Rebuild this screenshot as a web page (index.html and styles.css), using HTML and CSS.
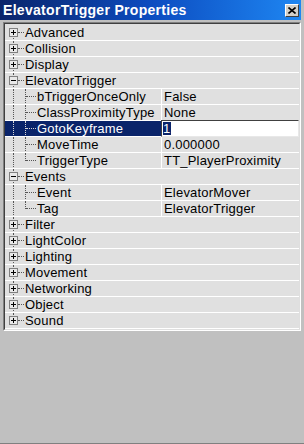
FILE: index.html
```html
<!DOCTYPE html>
<html>
<head>
<meta charset="utf-8">
<link rel="stylesheet" href="styles.css">
</head>
<body>
<div class="window">
  <div class="titlebar">
    <span class="title">ElevatorTrigger Properties</span>
    <span class="close"><svg width="8" height="7" viewBox="0 0 8 7"><path d="M0.5 0.5 L7.5 6.5 M7.5 0.5 L0.5 6.5" stroke="#000" stroke-width="1.6"/></svg></span>
  </div>
  <div class="panel"><div class="panel-inner">
    <div class="row cat first"><div class="name"><span class="gut"><span class="box plus"></span></span><span class="label">Advanced</span></div></div>
    <div class="row cat"><div class="name"><span class="gut"><span class="box plus"></span></span><span class="label">Collision</span></div></div>
    <div class="row cat"><div class="name"><span class="gut"><span class="box plus"></span></span><span class="label">Display</span></div></div>
    <div class="row cat"><div class="name"><span class="gut"><span class="box"></span></span><span class="label">ElevatorTrigger</span></div></div>
    <div class="row prop"><div class="name"><span class="gut"></span><span class="cgut"></span><span class="label">bTriggerOnceOnly</span></div><div class="value">False</div></div>
    <div class="row prop"><div class="name"><span class="gut"></span><span class="cgut"></span><span class="label">ClassProximityType</span></div><div class="value">None</div></div>
    <div class="row prop sel"><div class="name"><span class="gut"></span><span class="cgut"></span><span class="label">GotoKeyframe</span></div><div class="value edit"><span class="hl">1</span></div></div>
    <div class="row prop"><div class="name"><span class="gut"></span><span class="cgut"></span><span class="label">MoveTime</span></div><div class="value">0.000000</div></div>
    <div class="row prop clast"><div class="name"><span class="gut"></span><span class="cgut"></span><span class="label">TriggerType</span></div><div class="value">TT_PlayerProximity</div></div>
    <div class="row cat"><div class="name"><span class="gut"><span class="box"></span></span><span class="label">Events</span></div></div>
    <div class="row prop"><div class="name"><span class="gut"></span><span class="cgut"></span><span class="label">Event</span></div><div class="value">ElevatorMover</div></div>
    <div class="row prop clast"><div class="name"><span class="gut"></span><span class="cgut"></span><span class="label">Tag</span></div><div class="value">ElevatorTrigger</div></div>
    <div class="row cat"><div class="name"><span class="gut"><span class="box plus"></span></span><span class="label">Filter</span></div></div>
    <div class="row cat"><div class="name"><span class="gut"><span class="box plus"></span></span><span class="label">LightColor</span></div></div>
    <div class="row cat"><div class="name"><span class="gut"><span class="box plus"></span></span><span class="label">Lighting</span></div></div>
    <div class="row cat"><div class="name"><span class="gut"><span class="box plus"></span></span><span class="label">Movement</span></div></div>
    <div class="row cat"><div class="name"><span class="gut"><span class="box plus"></span></span><span class="label">Networking</span></div></div>
    <div class="row cat"><div class="name"><span class="gut"><span class="box plus"></span></span><span class="label">Object</span></div></div>
    <div class="row cat last"><div class="name"><span class="gut"><span class="box plus"></span></span><span class="label">Sound</span></div></div>
  </div></div>
</div>
</body>
</html>
```
FILE: styles.css
```css
* { box-sizing: border-box; }
html, body { margin: 0; padding: 0; }
body {
  background: #c0c0c0;
  font-family: "Liberation Sans", Arial, sans-serif;
  font-size: 13px;
  letter-spacing: 0.2px;
  color: #000;
  width: 304px;
  height: 444px;
  overflow: hidden;
}
.window {
  height: 444px;
  border-bottom: 1px solid #808080;
}
.titlebar {
  width: 301px;
  height: 20px;
  background: linear-gradient(to right, #0a246a 0%, #0c4cc0 50%, #1e86f2 100%);
  display: flex;
  align-items: flex-start;
  justify-content: space-between;
  padding: 0 2px 0 3px;
}
.title {
  color: #fff;
  font-weight: bold;
  font-size: 14px;
  letter-spacing: 0.3px;
  line-height: 19px;
  padding-top: 1px;
  white-space: nowrap;
}
.close {
  margin-top: 4px;
  width: 14px;
  height: 13px;
  background: #d4d0c8;
  border: 1px solid;
  border-color: #fff #404040 #404040 #fff;
  display: flex;
  align-items: center;
  justify-content: center;
}
.close svg { display: block; }
.panel {
  margin: 2px 0 0 3px;
  width: 298px;
  border: 1px solid;
  border-color: #808080 #fff #fff #808080;
}
.panel-inner {
  border: 1px solid;
  border-color: #404040 #dfdfdf #dfdfdf #404040;
  background: #e0e0e0;
  padding-top: 1px;
}
.row {
  display: flex;
  height: 16px;
  border-bottom: 1px solid #fff;
}
.name {
  width: 156px;
  flex: none;
  display: flex;
  height: 15px;
  line-height: 15px;
  white-space: nowrap;
  overflow: hidden;
}
.cat .name { width: auto; flex: 1; }
.value {
  flex: 1;
  border-left: 1px solid #fff;
  padding-left: 2px;
  line-height: 15px;
  white-space: nowrap;
  overflow: hidden;
}
.gut {
  width: 20px;
  height: 15px;
  flex: none;
  position: relative;
}
.gut::before {
  content: "";
  position: absolute;
  left: 8px;
  top: 0;
  bottom: -1px;
  border-left: 1px dotted #555;
}
.first .gut::before { top: 7px; }
.last .gut::before { bottom: 7px; }
.cat .gut::after {
  content: "";
  position: absolute;
  left: 13px;
  top: 7px;
  width: 6px;
  border-top: 1px dotted #555;
}
.cgut {
  width: 12px;
  height: 15px;
  flex: none;
  position: relative;
}
.cgut::before {
  content: "";
  position: absolute;
  left: 0;
  top: 0;
  bottom: -1px;
  border-left: 1px dotted #555;
}
.clast .cgut::before { bottom: 7px; }
.cgut::after {
  content: "";
  position: absolute;
  left: 1px;
  top: 7px;
  width: 10px;
  border-top: 1px dotted #555;
}
.box {
  position: absolute;
  left: 4px;
  top: 3px;
  width: 9px;
  height: 9px;
  border: 1px solid #808080;
  background: #e8e8e8;
  z-index: 1;
}
.box::before {
  content: "";
  position: absolute;
  left: 1px;
  top: 3px;
  width: 5px;
  height: 1px;
  background: #000;
}
.plus::after {
  content: "";
  position: absolute;
  left: 3px;
  top: 1px;
  width: 1px;
  height: 5px;
  background: #000;
}
.sel .name { background: #0a246a; color: #fff; }
.sel .gut::before, .sel .cgut::before, .sel .cgut::after { border-color: #d8d8d8; }
.edit {
  margin: -1px 0 -1px 0;
  height: 17px;
  background: #fff;
  border: 1px solid;
  border-color: #404040 #e8e8e8 #e8e8e8 #404040;
  padding-left: 1px;
  line-height: 15px;
}
.hl {
  display: inline-block;
  background: #0a246a;
  color: #fff;
  line-height: 13px;
  height: 13px;
  padding: 0 1px 0 0;
  margin-top: 1px;
  vertical-align: top;
}
```
